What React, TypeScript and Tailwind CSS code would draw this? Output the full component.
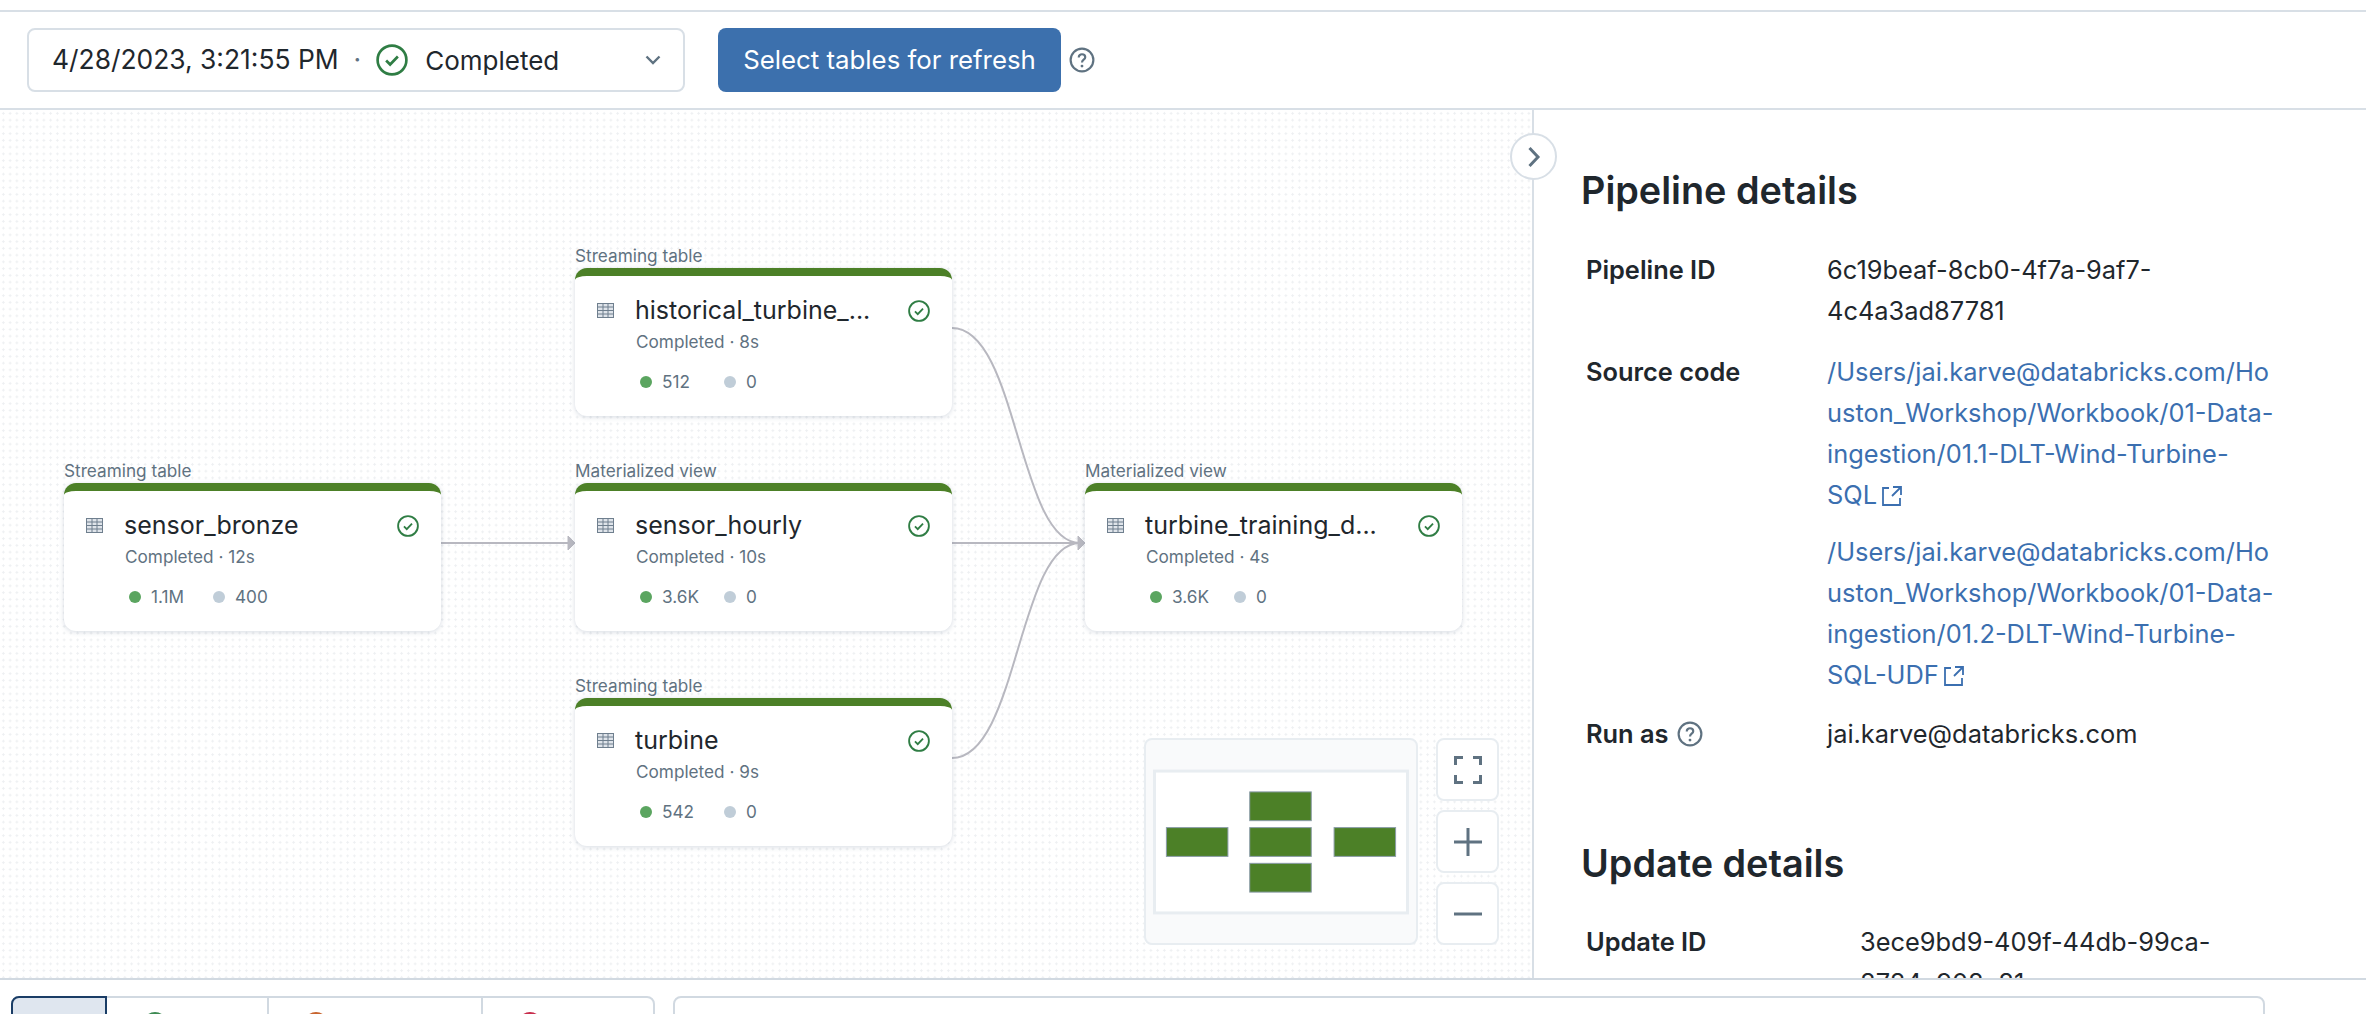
import { FC } from "react";

const CheckCircle: FC<{ className: string }> = ({ className }) => (
    <svg viewBox="0 0 24 24" fill="none" className={className}>
        <circle cx="12" cy="12" r="10.8" stroke="#2f7d44" strokeWidth="2" />
        <path d="M7.6 12.4l3 3 5.8-6" stroke="#2f7d44" strokeWidth="2" />
    </svg>
);

const HelpIcon: FC<{ className: string }> = ({ className }) => (
    <svg viewBox="0 0 24 24" fill="none" className={className}>
        <circle cx="12" cy="12" r="10.5" stroke="#5f7281" strokeWidth="2" />
        <path
            d="M9 9.6c0-1.8 1.3-2.9 3-2.9s3 1.1 3 2.7c0 2.4-3 2.3-3 4.8"
            stroke="#5f7281"
            strokeWidth="2"
        />
        <circle cx="12" cy="17.6" r="1.3" fill="#5f7281" />
    </svg>
);

const TableIcon = () => (
    <svg viewBox="0 0 17 15" fill="none" className="h-[15px] w-[17px]">
        <rect x="0.5" y="0.5" width="16" height="14" fill="#dfe4ea" stroke="#6f7f8e" />
        <path d="M6 0v15M11 0v15M0 4h17M0 7.5h17M0 11h17" stroke="#6f7f8e" />
    </svg>
);

const ExternalIcon = () => (
    <svg viewBox="0 0 22 22" fill="none" className="ml-1 inline-block h-[22px] w-[22px] align-[-3px]">
        <path
            d="M8 3H2v17h17v-7M12 2h8v8M20 2l-9 9"
            stroke="#3b6fb0"
            strokeWidth="1.8"
        />
    </svg>
);

interface NodeProps {
    kind: string;
    title: string;
    time: string;
    rows: string;
    errors: string;
    left: string;
    top: string;
}

const GraphNode: FC<NodeProps> = ({ kind, title, time, rows, errors, left, top }) => (
    <div className={`absolute w-[377px] ${left} ${top}`}>
        <div className="absolute top-[-22px] left-0 text-[17.2px] leading-5 text-[#5f7281]">
            {kind}
        </div>
        <div className="h-[148px] rounded-xl border-t-[8px] border-[#4c8027] bg-white shadow-[0_1px_5px_rgba(90,110,140,0.25)]">
            <div className="flex items-start pt-[18px] pr-[22px] pl-[22px]">
                <div className="mt-[9px] w-[38px] shrink-0">
                    <TableIcon />
                </div>
                <div className="min-w-0 flex-1 whitespace-nowrap text-[25px] leading-8 text-[#1f272d]">
                    {title}
                </div>
                <CheckCircle className="mt-[6px] h-[22px] w-[22px] shrink-0" />
            </div>
            <div className="mt-[6px] pl-[61px] text-[17.2px] leading-5 text-[#5f7281]">
                Completed · {time}
            </div>
            <div className="mt-5 flex items-center pl-[65px] text-[17.2px] leading-5 text-[#5f7281]">
                <span className="h-3 w-3 rounded-full bg-[#5ba560]" />
                <span className="ml-[10px] w-[62px]">{rows}</span>
                <span className="h-3 w-3 rounded-full bg-[#c0cdd8]" />
                <span className="ml-[10px]">{errors}</span>
            </div>
        </div>
    </div>
);

const Edges = () => (
    <svg width="1532" height="868" fill="none" className="absolute top-0 left-0">
        <g stroke="#b8b8c0" strokeWidth="2">
            <path d="M440 433H570" />
            <path d="M952 218C1018 218 1018 433 1080 433" />
            <path d="M952 433H1080" />
            <path d="M952 648C1018 648 1018 433 1080 433" />
        </g>
        <path d="M568 426l7 7-7 7zM1078 426l7 7-7 7z" fill="#b8b8c0" stroke="#b8b8c0" />
    </svg>
);

const MiniMap = () => (
    <div className="absolute top-[628px] left-[1144px] flex gap-[18px]">
        <div className="flex h-[207px] w-[274px] items-center rounded-lg border-2 border-[#e8edf1] bg-[#f9fafb] px-[7px]">
            <svg viewBox="0 0 258 146" className="h-[146px] w-[258px]">
                <rect x="1.5" y="1.5" width="255" height="143" fill="#fff" stroke="#e8edf1" strokeWidth="3" />
                <g fill="#4c8027" stroke="#8a9ba8">
                    <rect x="13.5" y="58.5" width="62" height="29" />
                    <rect x="97.5" y="22.5" width="62" height="29" />
                    <rect x="97.5" y="58.5" width="62" height="29" />
                    <rect x="97.5" y="94.5" width="62" height="29" />
                    <rect x="182.5" y="58.5" width="62" height="29" />
                </g>
            </svg>
        </div>
        <div className="flex flex-col gap-[9px]">
            <button className="flex h-[63px] w-[63px] items-center justify-center rounded-lg border-2 border-[#e8edf1] bg-white">
                <svg viewBox="0 0 28 28" fill="none" className="h-7 w-7">
                    <path
                        d="M1.5 9V1.5H9M19 1.5h7.5V9M26.5 19v7.5H19M9 26.5H1.5V19"
                        stroke="#5f7281"
                        strokeWidth="3"
                    />
                </svg>
            </button>
            <button className="flex h-[63px] w-[63px] items-center justify-center rounded-lg border-2 border-[#e8edf1] bg-white">
                <svg viewBox="0 0 28 28" fill="none" className="h-7 w-7">
                    <path d="M14 0v28M0 14h28" stroke="#5f7281" strokeWidth="3" />
                </svg>
            </button>
            <button className="flex h-[63px] w-[63px] items-center justify-center rounded-lg border-2 border-[#e8edf1] bg-white">
                <svg viewBox="0 0 28 28" fill="none" className="h-7 w-7">
                    <path d="M0 14h28" stroke="#5f7281" strokeWidth="3" />
                </svg>
            </button>
        </div>
    </div>
);

const Canvas = () => (
    <div className="relative h-full w-[1532px] shrink-0 overflow-hidden bg-white bg-[radial-gradient(#eef0f2_1px,transparent_1.2px)] bg-[size:6.75px_6.75px]">
        <Edges />
        <GraphNode
            kind="Streaming table"
            title="sensor_bronze"
            time="12s"
            rows="1.1M"
            errors="400"
            left="left-[64px]"
            top="top-[373px]"
        />
        <GraphNode
            kind="Streaming table"
            title="historical_turbine_..."
            time="8s"
            rows="512"
            errors="0"
            left="left-[575px]"
            top="top-[158px]"
        />
        <GraphNode
            kind="Materialized view"
            title="sensor_hourly"
            time="10s"
            rows="3.6K"
            errors="0"
            left="left-[575px]"
            top="top-[373px]"
        />
        <GraphNode
            kind="Streaming table"
            title="turbine"
            time="9s"
            rows="542"
            errors="0"
            left="left-[575px]"
            top="top-[588px]"
        />
        <GraphNode
            kind="Materialized view"
            title="turbine_training_d..."
            time="4s"
            rows="3.6K"
            errors="0"
            left="left-[1085px]"
            top="top-[373px]"
        />
        <MiniMap />
    </div>
);

const DetailsPanel = () => (
    <div className="relative min-w-0 flex-1 border-l-2 border-[#d8dfe6] bg-white">
        <div className="h-full overflow-hidden pt-[58px] pl-[47px] text-[25.4px] leading-[41px] text-[#1f272d]">
            <h2 className="text-[37.8px] leading-[44px] font-semibold">Pipeline details</h2>
            <div className="mt-[37px] grid grid-cols-[241px_460px] pl-[5px]">
                <div className="font-semibold">Pipeline ID</div>
                <div>6c19beaf-8cb0-4f7a-9af7-<br />4c4a3ad87781</div>
                <div className="mt-[20px] font-semibold">Source code</div>
                <div className="mt-[20px] text-[#3b6fb0]">
                    /Users/jai.karve@databricks.com/Ho<br />
                    uston_Workshop/Workbook/01-Data-<br />
                    ingestion/01.1-DLT-Wind-Turbine-<br />
                    SQL<ExternalIcon />
                    <div className="mt-4">
                        /Users/jai.karve@databricks.com/Ho<br />
                        uston_Workshop/Workbook/01-Data-<br />
                        ingestion/01.2-DLT-Wind-Turbine-<br />
                        SQL-UDF<ExternalIcon />
                    </div>
                </div>
                <div className="mt-[18px] flex items-center font-semibold">
                    Run as
                    <HelpIcon className="ml-2 h-[26px] w-[26px]" />
                </div>
                <div className="mt-[18px]">jai.karve@databricks.com</div>
            </div>
            <h2 className="mt-[87px] text-[37.8px] leading-[44px] font-semibold">Update details</h2>
            <div className="mt-[36px] grid grid-cols-[274px_420px] pl-[5px]">
                <div className="font-semibold">Update ID</div>
                <div>3ece9bd9-409f-44db-99ca-<br />8784c908c81e</div>
            </div>
        </div>
        <button className="absolute top-[23px] left-[-24px] flex h-[47px] w-[47px] items-center justify-center rounded-full border-2 border-[#d8dfe6] bg-white">
            <svg viewBox="0 0 14 22" fill="none" className="h-[22px] w-[14px]">
                <path d="M2.5 2l8.5 9-8.5 9" stroke="#5f7281" strokeWidth="3" />
            </svg>
        </button>
    </div>
);

const Dot: FC<{ color: string }> = ({ color }) => (
    <span className={`block h-6 w-6 rounded-full ${color}`} />
);

const BottomBar = () => (
    <div className="flex h-[36px] shrink-0 items-start gap-[18px] overflow-hidden border-t-2 border-[#d1d9e1] bg-white pt-4 pl-[11px]">
        <div className="flex h-[60px] w-[644px] rounded-t-lg border-2 border-[#d1d9e1]">
            <div className="-mt-0.5 -ml-0.5 h-[60px] w-[96px] rounded-tl-lg border-2 border-[#1a3d66] bg-[#dfe6ef]" />
            <div className="w-[160px] pt-[14px] pl-9">
                <Dot color="bg-[#3d8a52]" />
            </div>
            <div className="w-[214px] border-l-2 border-[#d1d9e1] pt-[14px] pl-[35px]">
                <Dot color="bg-[#c8642e]" />
            </div>
            <div className="flex-1 border-l-2 border-[#d1d9e1] pt-[14px] pl-[35px]">
                <Dot color="bg-[#c82d4c]" />
            </div>
        </div>
        <div className="h-[60px] w-[1592px] rounded-t-lg border-2 border-[#d1d9e1]" />
    </div>
);

const App = () => (
    <div className="flex h-[1014px] w-[2366px] flex-col overflow-hidden bg-white [font-family:Inter,sans-serif]">
        <div className="mt-[10px] flex h-[100px] shrink-0 items-start border-y-2 border-[#d8dfe6] pt-4 pl-[27px]">
            <div className="flex h-[64px] w-[658px] items-center rounded-lg border-2 border-[#d8dfe6] pr-[22px] pl-[23px] text-[26.4px] text-[#1f272d]">
                <span>4/28/2023, 3:21:55 PM</span>
                <span className="ml-[15px] text-[#5f7281]">·</span>
                <CheckCircle className="ml-[15px] h-8 w-8" />
                <span className="ml-[17px] text-[26px]">Completed</span>
                <svg viewBox="0 0 16 10" fill="none" className="ml-auto h-[10px] w-4">
                    <path d="M1.5 1.5L8 8l6.5-6.5" stroke="#5f7281" strokeWidth="2.4" />
                </svg>
            </div>
            <button className="ml-[33px] h-[64px] w-[343px] rounded-lg bg-[#3c70ad] text-[25.8px] text-white">
                Select tables for refresh
            </button>
            <HelpIcon className="mt-[19px] ml-[8px] h-[26px] w-[26px]" />
        </div>
        <div className="flex min-h-0 flex-1">
            <Canvas />
            <DetailsPanel />
        </div>
        <BottomBar />
    </div>
);

export default App;
